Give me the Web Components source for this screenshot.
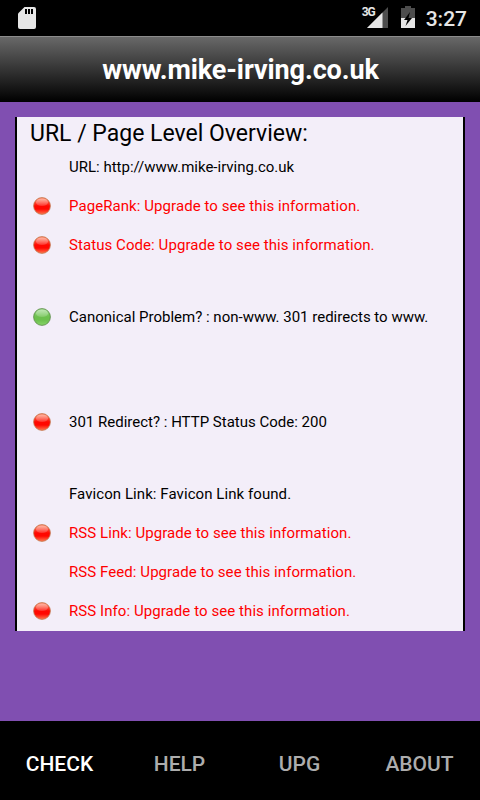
<!DOCTYPE html>
<html lang="en">
<head>
<meta charset="utf-8">
<title>www.mike-irving.co.uk</title>
<style>
body {
    margin: 0;
    background-color: #804fb1;
    font-family: Roboto, "Liberation Sans", sans-serif;
}
</style>
</head>
<body>
<seo-app></seo-app>

<script>
class StatusBar extends HTMLElement {

    constructor() {
        super();
        this.shadowDOM = this.attachShadow({mode: "open"});
    }

    connectedCallback() {
        this.render();
    }

    render() {
        this.shadowDOM.innerHTML = `
        <style>
        :host {
            display: flex;
            box-sizing: border-box;
            height: 36px;
            padding: 0 13px 0 18px;
            background-color: #000;
            color: #e6e6e6;
        }

        svg {
            display: block;
            flex: none;
        }

        .sd {
            margin: 7px auto 0 0;
        }

        .network {
            font-size: 12px;
            font-weight: bold;
            line-height: 14px;
            margin-top: 5px;
            width: 5px;
            white-space: nowrap;
            letter-spacing: -1px;
        }

        .signal {
            margin-top: 7px;
        }

        .battery {
            margin: 6px 11px 0 13px;
        }

        .clock {
            font-size: 21px;
            font-weight: 500;
            line-height: 38px;
        }
        </style>
        <svg class="sd" width="18" height="22" viewBox="0 0 18 22">
            <path fill="#e6e6e6" d="M6.500 0H16a2 2 0 0 1 2 2v18a2 2 0 0 1-2 2H2a2 2 0 0 1-2-2V6.500z"/>
            <path fill="#000" d="M7 2h2v5H7zM10 2h2v5h-2zM13 2h2v5h-2z"/>
        </svg>
        <span class="network">3G</span>
        <svg class="signal" width="21" height="21" viewBox="0 0 21 21">
            <path fill="#4d4d4d" d="M21 0v21H0z"/>
            <path fill="#e6e6e6" d="M15.500 5.500V21H0z"/>
        </svg>
        <svg class="battery" width="14" height="22" viewBox="0 0 14 22">
            <path fill="#4d4d4d" d="M4 0h6v2h4v10H0V2h4z"/>
            <path fill="#e6e6e6" d="M0 12h14v10H0z"/>
            <path fill="#000" d="M9 6L3 14h3.500L4.500 20l6.500-8H7.500z"/>
        </svg>
        <span class="clock">3:27</span>
        `;
    }
}

customElements.define("status-bar", StatusBar);

class TitleBar extends HTMLElement {

    constructor() {
        super();
        this.shadowDOM = this.attachShadow({mode: "open"});
    }

    connectedCallback() {
        this.render();
    }

    render() {
        this.shadowDOM.innerHTML = `
        <style>
        :host {
            display: block;
            box-sizing: border-box;
            height: 66px;
            border-top: 1px solid #8c8c8c;
            padding-left: 1px;
            background: linear-gradient(#686868, #000);
            color: #fff;
            font-size: 27px;
            font-weight: bold;
            letter-spacing: -0.1px;
            line-height: 66px;
            text-align: center;
        }
        </style>
        <slot></slot>
        `;
    }
}

customElements.define("title-bar", TitleBar);

class StatusLight extends HTMLElement {

    constructor() {
        super();
        this.shadowDOM = this.attachShadow({mode: "open"});
    }

    connectedCallback() {
        this.render();
    }

    render() {
        const green = this.getAttribute("color") === "green";
        const stops = green
            ? ["#8fd47b", "#6cc04d", "#86d468", "#5c8a4a"]
            : ["#ff7a5c", "#ff0800", "#ff7a50", "#c07a50"];

        this.shadowDOM.innerHTML = `
        <style>
        :host {
            display: block;
            width: 18px;
            height: 18px;
        }

        svg {
            display: block;
        }
        </style>
        <svg width="18" height="18" viewBox="0 0 18 18">
            <defs>
                <linearGradient id="ball" x1="0" y1="0" x2="0" y2="1">
                    <stop offset="0.1" stop-color="${stops[0]}"/>
                    <stop offset="0.5" stop-color="${stops[1]}"/>
                    <stop offset="0.68" stop-color="${stops[1]}"/>
                    <stop offset="1" stop-color="${stops[2]}"/>
                </linearGradient>
                <linearGradient id="shine" x1="0" y1="0" x2="0" y2="1">
                    <stop offset="0" stop-color="#fff" stop-opacity="0.4"/>
                    <stop offset="1" stop-color="#fff" stop-opacity="0.15"/>
                </linearGradient>
            </defs>
            <circle cx="9" cy="9" r="8.400" fill="url(#ball)" stroke="${stops[3]}" stroke-opacity="0.8"/>
            <ellipse cx="9" cy="5.200" rx="6" ry="3.800" fill="url(#shine)"/>
        </svg>
        `;
    }
}

customElements.define("status-light", StatusLight);

class ResultRow extends HTMLElement {

    constructor() {
        super();
        this.shadowDOM = this.attachShadow({mode: "open"});
    }

    connectedCallback() {
        this.render();
    }

    render() {
        const light = this.getAttribute("light");

        this.shadowDOM.innerHTML = `
        <style>
        :host {
            display: grid;
            box-sizing: border-box;
            grid-template-columns: 36px 1fr;
            align-items: center;
            height: 39px;
            padding: 0 0 2px 16px;
            font-size: 15px;
            line-height: 18px;
            white-space: nowrap;
        }

        :host([locked]) {
            color: #f00;
            letter-spacing: 0.07px;
        }

        .text {
            grid-column: 2;
        }
        </style>
        ${light ? `<status-light color="${light}"></status-light>` : ""}
        <span class="text"><slot></slot></span>
        `;
    }
}

customElements.define("result-row", ResultRow);

class ResultPanel extends HTMLElement {

    constructor() {
        super();
        this.shadowDOM = this.attachShadow({mode: "open"});
    }

    connectedCallback() {
        this.render();
    }

    render() {
        this.shadowDOM.innerHTML = `
        <style>
        :host {
            display: block;
            border: solid #000;
            border-width: 0 2px;
            background-color: #f3eef9;
            color: #000;
        }

        h2 {
            height: 31px;
            margin: 0;
            padding-left: 13px;
            font-size: 23px;
            font-weight: normal;
            line-height: 33px;
        }
        </style>
        <h2>${this.getAttribute("heading")}</h2>
        <slot></slot>
        `;
    }
}

customElements.define("result-panel", ResultPanel);

class TabBar extends HTMLElement {

    constructor() {
        super();
        this.shadowDOM = this.attachShadow({mode: "open"});
    }

    connectedCallback() {
        this.render();
    }

    render() {
        const active = this.getAttribute("active");
        const tabs = this.getAttribute("tabs").split(",");

        this.shadowDOM.innerHTML = `
        <style>
        :host {
            display: flex;
            height: 79px;
            background-color: #000;
        }

        button {
            flex: 1 1 0;
            padding: 6px 1px 0 0;
            border: 0;
            background: none;
            color: #adadad;
            font: 500 21px Roboto, sans-serif;
            cursor: pointer;
        }

        .active {
            color: #fff;
        }
        </style>
        ${tabs.map(tab => `<button class="${tab === active ? "active" : ""}">${tab}</button>`).join("")}
        `;
    }
}

customElements.define("tab-bar", TabBar);

class SeoApp extends HTMLElement {

    constructor() {
        super();
        this.shadowDOM = this.attachShadow({mode: "open"});
    }

    connectedCallback() {
        this.render();
    }

    render() {
        this.shadowDOM.innerHTML = `
        <style>
        :host {
            display: flex;
            flex-direction: column;
            height: 100vh;
        }

        main {
            flex: 1;
            padding: 15px;
        }

        .gap {
            margin-top: 33px;
        }

        .gap-large {
            margin-top: 66px;
        }

        .favicon {
            letter-spacing: 0.07px;
        }
        </style>
        <status-bar></status-bar>
        <title-bar>www.mike-irving.co.uk</title-bar>
        <main>
            <result-panel heading="URL / Page Level Overview:">
                <result-row>URL: http://www.mike-irving.co.uk</result-row>
                <result-row light="red" locked>PageRank: Upgrade to see this information.</result-row>
                <result-row light="red" locked>Status Code: Upgrade to see this information.</result-row>
                <result-row class="gap" light="green">Canonical Problem? : non-www. 301 redirects to www.</result-row>
                <result-row class="gap-large" light="red">301 Redirect? : HTTP Status Code: 200</result-row>
                <result-row class="gap favicon">Favicon Link: Favicon Link found.</result-row>
                <result-row light="red" locked>RSS Link: Upgrade to see this information.</result-row>
                <result-row locked>RSS Feed: Upgrade to see this information.</result-row>
                <result-row light="red" locked>RSS Info: Upgrade to see this information.</result-row>
            </result-panel>
        </main>
        <tab-bar tabs="CHECK,HELP,UPG,ABOUT" active="CHECK"></tab-bar>
        `;
    }
}

customElements.define("seo-app", SeoApp);
</script>
</body>
</html>
